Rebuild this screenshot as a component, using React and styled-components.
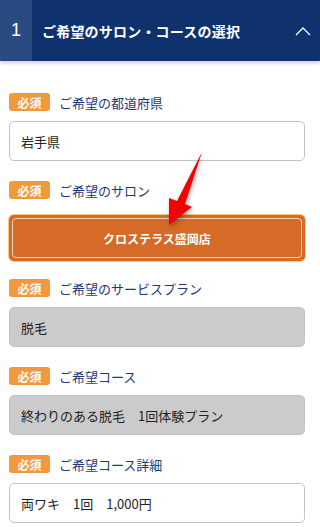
import React from "react"
import styled, { createGlobalStyle } from "styled-components"

const GlobalStyle = createGlobalStyle`
  html, body {
    margin: 0;
    padding: 0;
    background: #fff;
  }
  body {
    font-family: "Noto Sans CJK JP", "Noto Sans", sans-serif;
  }
`

const Page = styled.div`
  position: relative;
  width: 320px;
  min-height: 527px;
  overflow: hidden;
`

const Header = styled.div`
  display: flex;
  align-items: center;
  height: 61px;
  background: #0f316d;
  color: #fff;
  box-shadow: 0 2px 4px rgba(0, 0, 0, 0.2);
`

const StepNum = styled.div`
  width: 32px;
  height: 100%;
  display: flex;
  align-items: center;
  justify-content: center;
  background: #2a4b81;
  font-family: "Liberation Sans", Arial, sans-serif;
  font-size: 18px;
`

const Title = styled.div`
  flex: 1;
  margin-left: 10px;
  font-size: 14px;
  font-weight: bold;
  letter-spacing: 0.2px;
`

const Chevron = styled.svg`
  width: 16px;
  height: 10px;
  margin-right: 9px;
`

const Body = styled.div`
  display: flex;
  flex-direction: column;
  padding: 32px 15px 0 9px;
`

const Field = styled.div`
  display: flex;
  flex-direction: column;
  gap: 10px;
  margin-bottom: 20px;
`

const LabelRow = styled.div`
  display: flex;
  align-items: center;
  gap: 9px;
  height: 18px;
`

const Badge = styled.span`
  display: inline-flex;
  align-items: center;
  justify-content: center;
  width: 41px;
  height: 18px;
  border-radius: 3px;
  background: #f2983d;
  color: #fff;
  font-size: 12px;
  font-weight: bold;
`

const LabelText = styled.span`
  color: #1d3a77;
  font-size: 13px;
`

const Box = styled.div`
  box-sizing: border-box;
  height: 40px;
  display: flex;
  align-items: center;
  padding-left: 11px;
  border: 1px solid #c2c2c2;
  border-radius: 5px;
  background: ${p => (p.disabled ? "#cbcbcb" : "#fff")};
  color: #222;
  font-size: 13px;
  white-space: pre;
`

const SalonButton = styled.div`
  box-sizing: border-box;
  height: 46px;
  margin-top: 6px;
  margin-bottom: -2px;
  display: flex;
  align-items: center;
  justify-content: center;
  border-radius: 5px;
  background: #d66a27;
  box-shadow: 0 0 0 1px #f3c878;
  color: #fff;
  font-size: 12px;
  font-weight: bold;
  position: relative;

  &::after {
    content: "";
    position: absolute;
    inset: 3px;
    border: 1px solid #f6d3b8;
    border-radius: 4px;
  }
`

const Arrow = styled.svg`
  position: absolute;
  left: 0;
  top: 0;
  width: 320px;
  height: 260px;
  pointer-events: none;
  filter: drop-shadow(1px 2px 2px rgba(0, 0, 0, 0.35));
`

const fields = [
  { label: "ご希望の都道府県", value: "岩手県" },
  { label: "ご希望のサロン", salon: "クロステラス盛岡店" },
  { label: "ご希望のサービスプラン", value: "脱毛", disabled: true },
  { label: "ご希望コース", value: "終わりのある脱毛　1回体験プラン", disabled: true },
  { label: "ご希望コース詳細", value: "両ワキ　1回　1,000円" }
]

export default function App() {
  return (
    <Page>
      <GlobalStyle />
      <Header>
        <StepNum>1</StepNum>
        <Title>ご希望のサロン・コースの選択</Title>
        <Chevron viewBox="0 0 16 10">
          <polyline points="1,9 8,2 15,9" fill="none" stroke="#fff" strokeWidth="1.3" />
        </Chevron>
      </Header>
      <Body>
        {fields.map(f => (
          <Field key={f.label}>
            <LabelRow>
              <Badge>必須</Badge>
              <LabelText>{f.label}</LabelText>
            </LabelRow>
            {f.salon ? (
              <SalonButton>{f.salon}</SalonButton>
            ) : (
              <Box disabled={f.disabled}>{f.value}</Box>
            )}
          </Field>
        ))}
      </Body>
      <Arrow viewBox="0 0 320 260">
        <polygon
          points="202,152 185,204 192,207 169,225 169,198 177,201"
          fill="#f50000"
        />
      </Arrow>
    </Page>
  )
}
